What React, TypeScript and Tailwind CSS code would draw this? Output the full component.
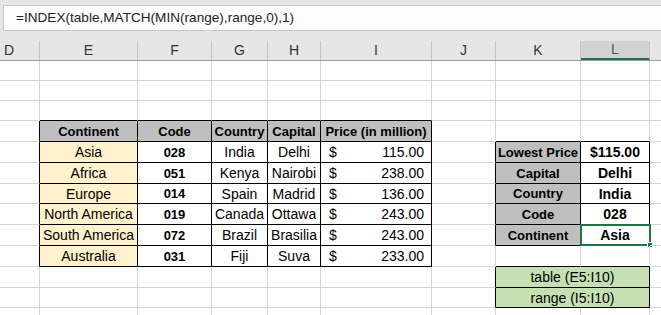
import clsx from "clsx"

const colWidths = [40, 98, 74, 56, 53, 111, 64, 85, 69, 30]
const colNames = ["D", "E", "F", "G", "H", "I", "J", "K", "L", ""]
const rowHeights = [20, 20, 20, 21, 21, 21, 20, 21, 21, 21, 21, 20, 21, 10]

type Cell = { t?: string; bg?: string; b?: boolean; big?: boolean; price?: string; span?: number; skip?: boolean; sel?: boolean }

const tableRows = [
  ["Asia", "028", "India", "Delhi", "115.00"],
  ["Africa", "051", "Kenya", "Nairobi", "238.00"],
  ["Europe", "014", "Spain", "Madrid", "136.00"],
  ["North America", "019", "Canada", "Ottawa", "243.00"],
  ["South America", "072", "Brazil", "Brasilia", "243.00"],
  ["Australia", "031", "Fiji", "Suva", "233.00"],
]

const lookup = [
  ["Lowest Price", "$115.00"],
  ["Capital", "Delhi"],
  ["Country", "India"],
  ["Code", "028"],
  ["Continent", "Asia"],
]

// cells that carry the black table borders
function inBox(r: number, c: number) {
  if (r >= 3 && r <= 9 && c >= 1 && c <= 5) return true
  if (r >= 4 && r <= 8 && c >= 7 && c <= 8) return true
  if (r >= 10 && r <= 11 && c >= 7 && c <= 8) return true
  return false
}

function cellAt(r: number, c: number): Cell {
  if (r === 3 && c >= 1 && c <= 5) {
    return { t: ["Continent", "Code", "Country", "Capital", "Price (in million)"][c - 1], bg: "gray", b: true }
  }
  if (r >= 4 && r <= 9 && c >= 1 && c <= 5) {
    const row = tableRows[r - 4]
    if (c === 1) return { t: row[0], bg: "yellow" }
    if (c === 2) return { t: row[1], b: true }
    if (c === 5) return { price: row[4] }
    return { t: row[c - 1] }
  }
  if (r >= 4 && r <= 8 && c === 7) return { t: lookup[r - 4][0], bg: "gray", b: true }
  if (r >= 4 && r <= 8 && c === 8) return { t: lookup[r - 4][1], b: true, big: true, sel: r === 8 }
  if (r === 10 && c === 7) return { t: "table (E5:I10)", bg: "green", span: 2 }
  if (r === 11 && c === 7) return { t: "range (I5:I10)", bg: "green", span: 2 }
  if ((r === 10 || r === 11) && c === 8) return { skip: true }
  return {}
}

function GridCell({ r, c }: { r: number; c: number }) {
  const cell = cellAt(r, c)
  if (cell.skip) return null
  const lastCol = c + (cell.span ?? 1) - 1
  const width = colWidths.slice(c, lastCol + 1).reduce((a, b) => a + b, 0)
  const blackRight = inBox(r, lastCol) || inBox(r, lastCol + 1)
  const blackBottom = inBox(r, c) || inBox(r + 1, c)
  return (
    <div
      style={{ width }}
      className={clsx(
        "relative box-border flex shrink-0 items-center justify-center overflow-visible whitespace-nowrap border-r border-b pt-[1px]",
        blackRight ? "border-r-black" : "border-r-[#d4d4d4]",
        blackBottom ? "border-b-black" : "border-b-[#d4d4d4]",
        cell.bg === "gray" && "bg-[#bfbfbf]",
        cell.bg === "yellow" && "bg-[#fff2cc]",
        cell.bg === "green" && "bg-[#c6e0b4]",
        cell.b ? (cell.big ? "text-[14px] font-bold" : "text-[13px] font-bold") : "text-[14px]"
      )}
    >
      {cell.price ? (
        <div className="flex w-full justify-between pr-[7px] pl-[8px]">
          <span>$</span>
          <span>{cell.price}</span>
        </div>
      ) : (
        cell.t
      )}
      {cell.sel && (
        <div className="absolute -top-[1px] -left-[1px] h-[22px] w-[71px] border-2 border-[#217346]">
          <div className="absolute -right-[4px] -bottom-[4px] h-[6px] w-[6px] border border-white bg-[#217346]" />
        </div>
      )}
    </div>
  )
}

export default function App() {
  return (
    <div className="h-[315px] w-[661px] overflow-hidden bg-white font-['Liberation_Sans',sans-serif] text-black">
      <div className="h-[41px] bg-[#e6e6e6] pt-[5px]">
        <div className="ml-[3px] flex h-[26px] items-center border-y border-l border-[#c6c6c6] bg-[#fdfdfd] pl-[12px] text-[13.6px] text-[#222]">
          =INDEX(table,MATCH(MIN(range),range,0),1)
        </div>
      </div>
      <div className="flex h-[20px] border-b border-[#9b9b9b] bg-[#e6e6e6] text-[14px] text-[#333]">
        {colNames.map((n, i) => (
          <div
            key={i}
            style={{ width: colWidths[i] }}
            className={clsx(
              "box-border flex shrink-0 items-center border-r border-r-[#c6c6c6]",
              i === 0 ? "justify-start pl-[4px]" : "justify-center",
              i === 8 && "border-b-2 border-b-[#217346] bg-[#d2d2d2] text-[#217346]"
            )}
          >
            {n}
          </div>
        ))}
      </div>
      {rowHeights.map((h, r) => (
        <div key={r} style={{ height: h }} className="flex">
          {colWidths.map((_, c) => (
            <GridCell key={c} r={r} c={c} />
          ))}
        </div>
      ))}
    </div>
  )
}
